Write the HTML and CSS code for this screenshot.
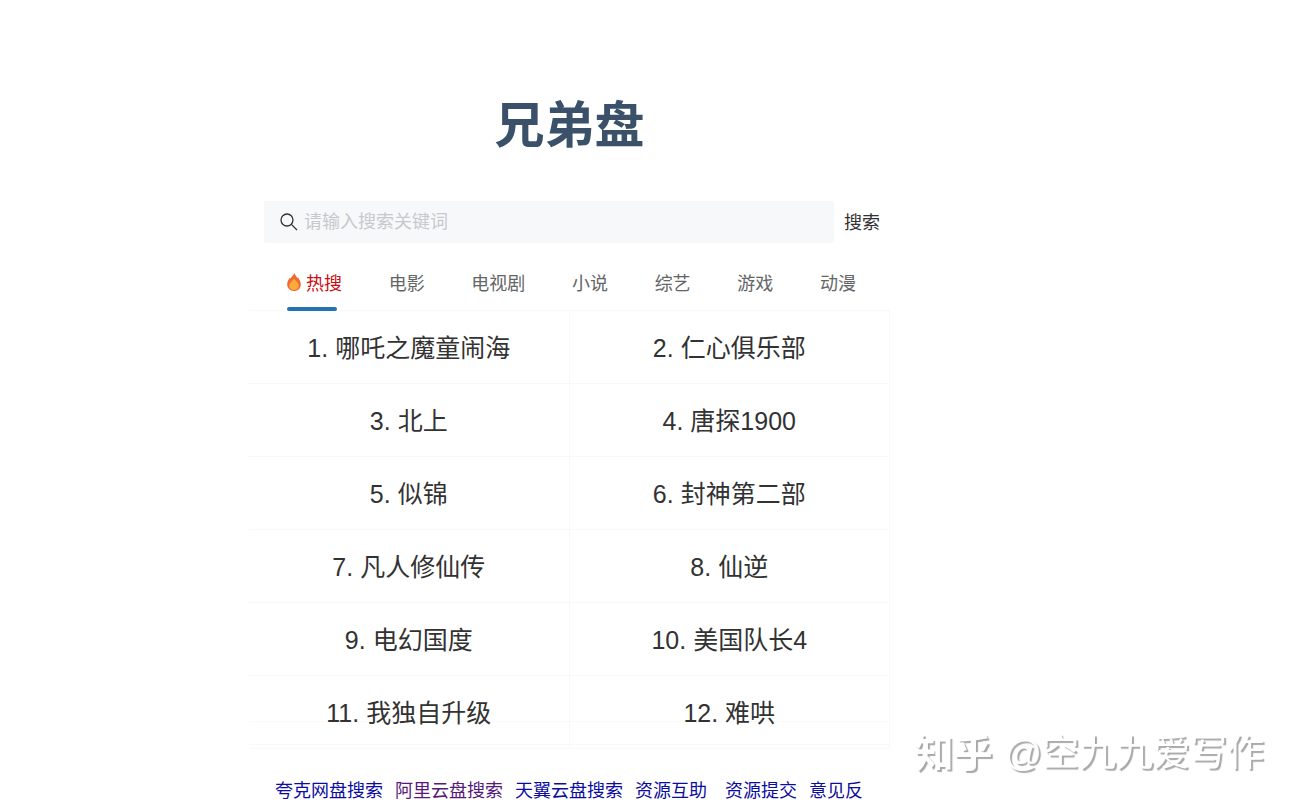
FILE: index.html
```html
<!DOCTYPE html>
<html lang="zh-CN">
<head>
  <meta charset="utf-8">
  <meta name="viewport" content="width=device-width, initial-scale=1">
  <title>兄弟盘</title>
  <link rel="stylesheet" href="styles.css">
</head>
<body>
  <main class="page">
    <h1 class="title">兄弟盘</h1>

    <form class="search" onsubmit="return false">
      <label class="search-box">
        <svg class="search-icon" viewBox="0 0 18 18" aria-hidden="true">
          <circle cx="7" cy="7" r="6"/>
          <path d="M11.4 11.4L17 17"/>
        </svg>
        <input type="text" placeholder="请输入搜索关键词" aria-label="请输入搜索关键词">
      </label>
      <button type="submit">搜索</button>
    </form>

    <nav class="tabs">
      <a class="tab active" href="#hot">
        <svg class="fire" viewBox="0 0 14 18" aria-hidden="true">
          <path fill="#ee6a35" d="M7.4 0C7.8 1.8 9.4 3.2 10.4 5L11 4.4C12.6 6.6 13.8 8.8 13.8 11.2C13.8 15.2 11 18 7 18S.2 15.2 .2 11.3C.2 9 1.2 7 2.6 5L3.2 5.6C4.6 4 6.4 2.4 7.4 0Z"/>
          <path fill="#fba93a" d="M7 5.4C8.4 7.6 11.8 9.6 11.8 12.7C11.8 15.3 9.8 17 7 17S2.2 15.3 2.2 12.7C2.2 9.9 5.6 8 7 5.4Z"/>
        </svg>
        <span>热搜</span>
      </a>
      <a class="tab" href="#movie">电影</a>
      <a class="tab" href="#tv">电视剧</a>
      <a class="tab" href="#novel">小说</a>
      <a class="tab" href="#variety">综艺</a>
      <a class="tab" href="#game">游戏</a>
      <a class="tab" href="#anime">动漫</a>
    </nav>

    <div class="list">
      <div class="item">1. 哪吒之魔童闹海</div>
      <div class="item">2. 仁心俱乐部</div>
      <div class="item">3. 北上</div>
      <div class="item">4. 唐探1900</div>
      <div class="item">5. 似锦</div>
      <div class="item">6. 封神第二部</div>
      <div class="item">7. 凡人修仙传</div>
      <div class="item">8. 仙逆</div>
      <div class="item">9. 电幻国度</div>
      <div class="item">10. 美国队长4</div>
      <div class="item">11. 我独自升级</div>
      <div class="item">12. 难哄</div>
    </div>

    <footer class="links">
      <a href="#quark">夸克网盘搜索</a>
      <a class="visited" href="#aliyun">阿里云盘搜索</a>
      <a href="#tianyi">天翼云盘搜索</a>
      <a href="#help">资源互助</a>
      <a class="group" href="#submit">资源提交</a>
      <a href="#feedback">意见反</a>
    </footer>
  </main>

  <div class="watermark"><span class="brand">知乎</span><span>@空九九爱写作</span></div>
</body>
</html>
```
FILE: styles.css
```css
* { box-sizing: border-box; }
body { margin: 0; background: #fff; color: #323233; font-family: "Liberation Sans", "Noto Sans CJK SC", sans-serif; font-size: 18px; }
a { text-decoration: none; }

.page { max-width: 890px; padding-left: 249px; }
.title { margin: 0; padding: 90px 0 38px; font-size: 50px; line-height: 73px; text-align: center; color: #3a5169; }

/* search */
.search { display: flex; align-items: center; padding: 0 10px 0 15px; }
.search-box { flex: 1; display: flex; align-items: center; gap: 6px; height: 42px; padding: 0 16px; background: #f7f8fa; border-radius: 2px; }
.search-icon { width: 18px; height: 18px; fill: none; stroke: #323233; stroke-width: 1.3; }
.search-box input { flex: 1; min-width: 0; padding: 0; border: none; outline: none; background: none; font: inherit; color: #323233; }
.search-box input::placeholder { color: #c8c9cc; opacity: 1; }
.search button { padding: 0 0 2px 10px; border: none; background: none; font: inherit; color: #323233; cursor: pointer; }

/* tabs */
.tabs { display: flex; justify-content: space-between; height: 68px; padding: 0 34px 0 38px; border-bottom: 1px solid #f7f8f9; white-space: nowrap; }
.tab { position: relative; display: flex; align-items: center; gap: 5px; padding-top: 10px; height: 68px; color: #646566; }
.tab.active { color: #c80f14; }
.tab.active::after { content: ""; position: absolute; left: 0; bottom: 0; width: 50px; height: 4px; border-radius: 2px; background: #2472b3; }
.fire { width: 14px; height: 18px; }

/* hot list */
.list { position: relative; display: grid; grid-template-columns: 1fr 1fr; }
.list::after { content: ""; position: absolute; z-index: -1; left: 0; right: 0; bottom: 4px; height: 22px; border: solid #f9f9fa; border-width: 1px 0; }
.item { height: 73px; border-right: 1px solid #f7f8f9; border-bottom: 1px solid #f7f8f9; font-size: 25px; line-height: 75px; text-align: center; }

.links { display: flex; gap: 12px; padding: 29px 0 0 26px; line-height: 26px; white-space: nowrap; }
.links a { color: #0c0c9e; }
.links .visited { color: #551a7b; }
.links .group { margin-left: 6px; }

.watermark { position: fixed; right: 33px; bottom: 25px; display: flex; align-items: center; gap: 12px; font-size: 37px; line-height: 52px; color: #fff; text-shadow: 2px 2px 1px #a8a8a8; }
.brand { font-size: 39px; font-weight: bold; }
```
